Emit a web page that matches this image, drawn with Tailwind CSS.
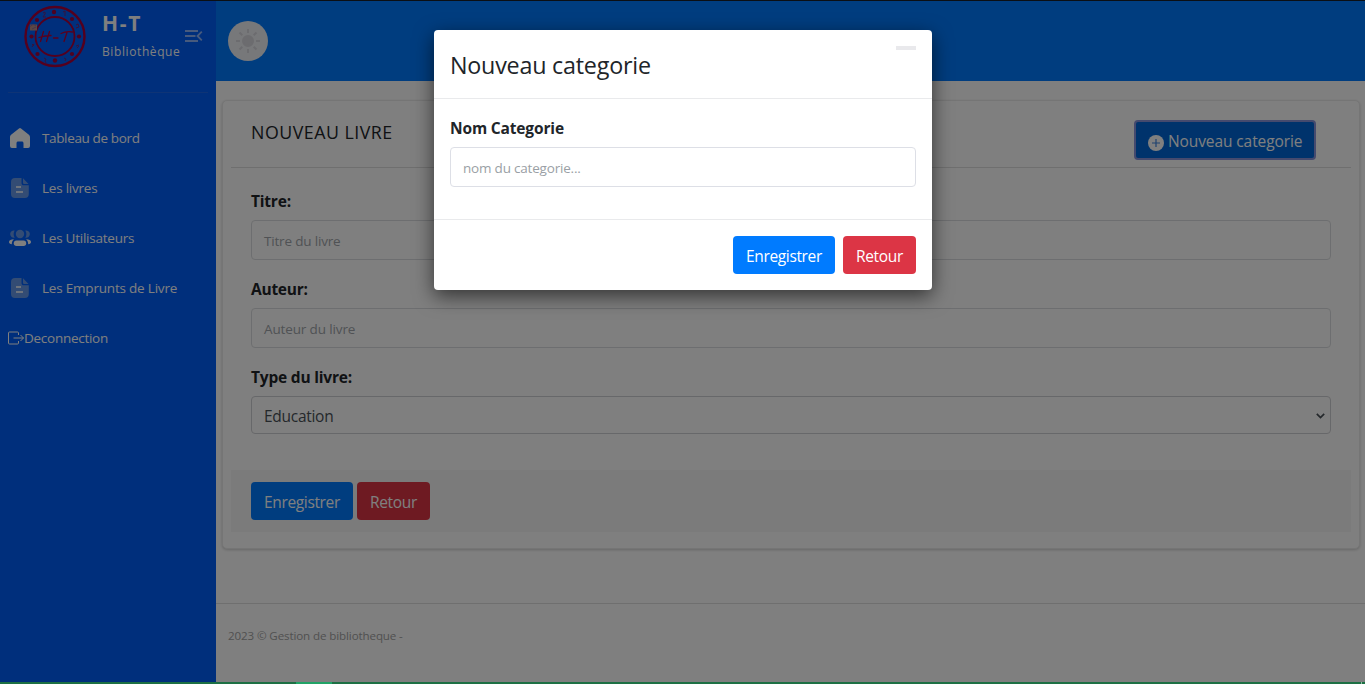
<!DOCTYPE html>
<html lang="fr">
<head>
<meta charset="utf-8">
<title>Gestion de bibliotheque</title>
<script src="https://cdn.jsdelivr.net/npm/@tailwindcss/browser@4"></script>
</head>
<body class="font-['Open_Sans','Noto_Sans',sans-serif] text-[15.5px] text-[#212529]">
<div class="relative flex h-[684px] w-[1365px] flex-col overflow-hidden bg-[#0b0f14] pt-px">
  <div class="flex h-[681px]">
    <!-- Sidebar -->
    <aside class="flex w-[216px] shrink-0 flex-col bg-[#005ef8] text-white">
      <div class="flex h-[91px] pl-[23px]">
        <svg class="mt-[3px] size-[64px] shrink-0" viewBox="0 0 64 64" fill="none">
          <circle cx="32" cy="32.500" r="29.500" stroke="#a8003c" stroke-width="2.4"/>
          <circle cx="32" cy="32.500" r="19.5" stroke="#a8003c" stroke-width="1.800"/>
          <g fill="#9c0440">
            <circle cx="31" cy="8" r="2.2"/><circle cx="49" cy="15" r="2.1"/><circle cx="56" cy="32.5" r="2.1"/><circle cx="49" cy="50" r="2.1"/><circle cx="32" cy="56.5" r="2.2"/><circle cx="14.500" cy="50" r="2.1"/><circle cx="8.500" cy="32.500" r="2.1"/><circle cx="14" cy="16" r="2.1"/>
          </g>
          <g stroke="#6c2478" stroke-width="1">
            <path d="M20 9q3-2 2 1l-2 3h3M40 8l2-1v5M53 21l2-1 1 3-3 1M53 42l3-1M54 44l2-2M41 54l2 1-1 2M21 54l2 1-1 2 1 2M9 40l2 2M9 43l2-3"/>
          </g>
          <g stroke="#b40038" stroke-width="1.300" stroke-linecap="round">
            <path d="M20.500 27.500L17.500 37.500M26.500 27.500L23.500 37.500M16 33.500q6-2 12-2M30.500 34h4.500M38 29.500q5-2.500 11.500-1.500M44 28.500L41 37.500"/>
          </g>
          <path d="M7 20.500h7v6H7z" fill="#b98f86"/><path d="M7 22.500l3-2 3 1M9 25l4-2" stroke="#8c6ba0" stroke-width="1"/>
        </svg>
        <div class="ml-[15px] w-[82px] shrink-0">
          <div class="h-[42px] pt-[7px] text-[21px] leading-[30px] font-bold tracking-[1.65px]">H-T</div>
          <div class="text-xs leading-[17px] tracking-[.6px]">Bibliothèque</div>
        </div>
        <svg class="mt-[28px] h-[14px] w-[19px] shrink-0" viewBox="0 0 19 14" fill="none" stroke="#8fb5fb" stroke-width="1.800"><path d="M1 2h13M1 7h10.500M1 12h13M17.800 2.700L13.500 7l4.300 4.300"/></svg>
      </div>
      <div class="mx-2 h-px bg-[#1c69ec]"></div>
      <nav class="flex flex-col pt-5 text-[13.5px]">
        <a class="flex h-[50px] items-center pl-2 tracking-[-.36px]">
          <svg class="mr-[10px] size-6" viewBox="0 0 24 24" fill="#fff"><path d="M11 2.400a1.700 1.700 0 0 1 2 0l7.600 6.100c.9.8 1.400 1.700 1.400 2.800V20a2 2 0 0 1-2 2h-4.500v-4.500c0-1.500-.7-2-1.800-2h-3.400c-1.100 0-1.800.5-1.800 2V22H4a2 2 0 0 1-2-2v-8.700c0-1.100.5-2 1.400-2.800z"/></svg><span class="pt-px">Tableau de bord</span></a>
        <a class="flex h-[50px] items-center pl-2 tracking-[-.23px]">
          <svg class="mr-[10px] size-6" viewBox="0 0 24 24"><path d="M7 2h6.500v5c0 1.500.8 2.300 2.300 2.300h5V18a4 4 0 0 1-4 4H7a4 4 0 0 1-4-4V6a4 4 0 0 1 4-4zM15 2.200L20.500 8h-3.800C15.500 8 15 7.500 15 6.500z" fill="#6699e8"/><path d="M8 11h5M8 16h7" stroke="#fff" stroke-width="1.500"/></svg><span class="pt-px">Les livres</span></a>
        <a class="flex h-[50px] items-center pl-2 tracking-[-.24px]">
          <svg class="mr-[10px] size-6" viewBox="0 0 24 24"><circle cx="12" cy="8" r="4.200" fill="#6699e8"/><path d="M6.700 4.500a3.700 3.700 0 1 0 0 7.200 7 7 0 0 1 0-7.200zM17.300 4.500a3.700 3.700 0 1 1 0 7.200 7 7 0 0 0 0-7.200z" fill="#6699e8"/><rect x="5.800" y="14.500" width="12.400" height="5.500" rx="2.700" fill="#fff"/><path d="M6 13.300c-3 0-5 .9-5 2.800 0 1.300 1 2 2.800 2.200 0-2 .5-3.600 2.200-5zM18 13.300c3 0 5 .9 5 2.800 0 1.300-1 2-2.800 2.200 0-2-.5-3.600-2.200-5z" fill="#fff"/></svg><span class="pt-px">Les Utilisateurs</span></a>
        <a class="flex h-[50px] items-center pl-2 tracking-[-.2px]">
          <svg class="mr-[10px] size-6" viewBox="0 0 24 24"><path d="M7 2h6.500v5c0 1.500.8 2.300 2.300 2.300h5V18a4 4 0 0 1-4 4H7a4 4 0 0 1-4-4V6a4 4 0 0 1 4-4zM15 2.200L20.500 8h-3.800C15.500 8 15 7.500 15 6.500z" fill="#6699e8"/><path d="M8 11h5M8 16h7" stroke="#fff" stroke-width="1.500"/></svg><span class="pt-px">Les Emprunts de Livre</span></a>
        <a class="flex h-[50px] items-center pl-2 tracking-[-.27px]">
          <svg class="size-4" viewBox="0 0 16 16" fill="none" stroke="#fff" stroke-linejoin="round"><path d="M10.500 5V3a1 1 0 0 0-1-1H1.500a1 1 0 0 0-1 1v10a1 1 0 0 0 1 1h8a1 1 0 0 0 1-1v-2M5.500 8h10M12.500 5l3 3-3 3"/></svg><span class="pt-px">Deconnection</span></a>
      </nav>
    </aside>

    <!-- Main column -->
    <main class="flex grow flex-col bg-white">
      <header class="flex h-[80px] items-center bg-[#007bff] pl-3">
        <div class="flex size-10 items-center justify-center rounded-full bg-[#eff0f4]">
          <svg class="size-6" viewBox="0 0 24 24" fill="#d8d8de" stroke="#d8d8de" stroke-width="2"><circle cx="12" cy="12" r="5"/><path d="M12 0v4M12 20v4M0 12h4M20 12h4M3.500 3.500l2.800 2.800M17.700 17.700l2.800 2.800M3.500 20.500l2.800-2.800M17.700 6.300l2.800-2.800"/></svg>
        </div>
      </header>
      <section class="mt-[19px] ml-[6px] flex h-[449px] w-[1138px] flex-col rounded-[5px] border border-[#ebebeb] bg-white px-2 shadow-[0_1px_3px_rgba(0,0,0,.2)]">
        <div class="flex h-[67px] justify-between border-b border-[#dedede] pr-[35px] pl-5">
          <h1 class="pt-[19px] text-[17.8px] leading-6 tracking-[.5px]">NOUVEAU LIVRE</h1>
          <button class="mt-[19px] flex h-10 w-[182px] rounded-[4px] border-2 border-[#8b94dc] bg-[#0067d9] pt-[8px] pl-3 leading-6 tracking-[-.1px] text-white">
            <svg class="mt-[5px] mr-1 size-4" viewBox="0 0 16 16"><circle cx="8" cy="8" r="8" fill="#fff"/><path d="M8 4v8M4 8h8" stroke="#3e84df" stroke-width="1.200"/></svg><span class="leading-[23px]">Nouveau categorie</span>
          </button>
        </div>
        <div class="flex h-[302px] flex-col px-5 pt-[21px]">
          <label class="h-[31px] leading-[25px] font-bold tracking-[-.2px]">Titre:</label>
          <div class="h-10 rounded-[4px] border border-[#dbdde0] pl-3 text-[13.5px] leading-[40px] tracking-[-.18px] text-[#a0a5aa]">Titre du livre</div>
          <label class="mt-[17px] h-[31px] leading-[25px] font-bold tracking-[-.25px]">Auteur:</label>
          <div class="h-10 rounded-[4px] border border-[#dbdde0] pl-3 text-[13.5px] leading-[40px] tracking-[-.13px] text-[#a0a5aa]">Auteur du livre</div>
          <label class="mt-[17px] h-[31px] leading-[25px] font-bold tracking-[-.2px]">Type du livre:</label>
          <div class="flex h-[38px] items-center justify-between rounded-[4px] border border-[#ced0d4] pr-[5px] pl-3 tracking-[-.28px] text-[#495057]"><span class="pt-1">Education</span>
            <svg class="mt-px h-[6px] w-[9px]" viewBox="0 0 9 6" fill="none" stroke="#495057" stroke-width="1.700"><path d="M.8.8l3.700 3.700L8.200.8"/></svg>
          </div>
        </div>
        <div class="flex h-[62px] gap-1 bg-[#f7f7f7] px-5 pt-3 text-white">
          <button class="h-[38px] w-[102px] rounded-[4px] bg-[#007bff] pt-1 tracking-[-.36px]">Enregistrer</button>
          <button class="h-[38px] w-[73px] rounded-[4px] bg-[#dc3545] pt-1 tracking-[-.32px]">Retour</button>
        </div>
      </section>
      <footer class="mt-[54px] grow border-t border-[#dedede] pt-[23px] pl-3 text-[11.6px] leading-[18px] tracking-[-.12px] text-[#a2a2a2]">2023 © Gestion de bibliotheque -</footer>
    </main>
  </div>
  <!-- Bottom status strip -->
  <div class="flex h-[2px] bg-[#1d7044]"><div class="ml-[296px] h-[2px] w-[36px] bg-[#21a366]"></div><div class="ml-auto mr-[3px] h-[2px] w-px bg-[#8fb9a2]"></div></div>

  <!-- Modal -->
  <div class="absolute top-px left-0 flex h-[681px] w-full items-start justify-center bg-black/50 pt-[29px] pl-px">
    <div class="flex h-[260px] w-[498px] flex-col rounded-[4px] bg-white shadow-[0_6px_20px_rgba(0,0,0,.6)]">
      <div class="flex h-[69px] justify-between border-b border-[#e9eaec] px-4 pt-4">
        <h2 class="text-[23.3px] leading-[39px] tracking-[-.22px]">Nouveau categorie</h2>
        <div class="h-1 w-5 bg-[#e9e9ec]"></div>
      </div>
      <div class="flex h-[121px] flex-col border-b border-[#e9eaec] px-4 pt-[17px]">
        <label class="h-[31px] leading-[25px] font-bold tracking-[-.15px]">Nom Categorie</label>
        <div class="h-10 rounded-[4px] border border-[#dddfe6] pl-3 text-[13.5px] leading-[40px] tracking-[-.2px] text-[#9a9fa5]">nom du categorie...</div>
      </div>
      <div class="flex justify-end gap-2 px-4 pt-4 text-white">
        <button class="h-[38px] w-[102px] rounded-[4px] bg-[#007bff] pt-1 tracking-[-.36px]">Enregistrer</button>
        <button class="h-[38px] w-[73px] rounded-[4px] bg-[#dc3545] pt-1 tracking-[-.32px]">Retour</button>
      </div>
    </div>
  </div>
</div>
</body>
</html>
